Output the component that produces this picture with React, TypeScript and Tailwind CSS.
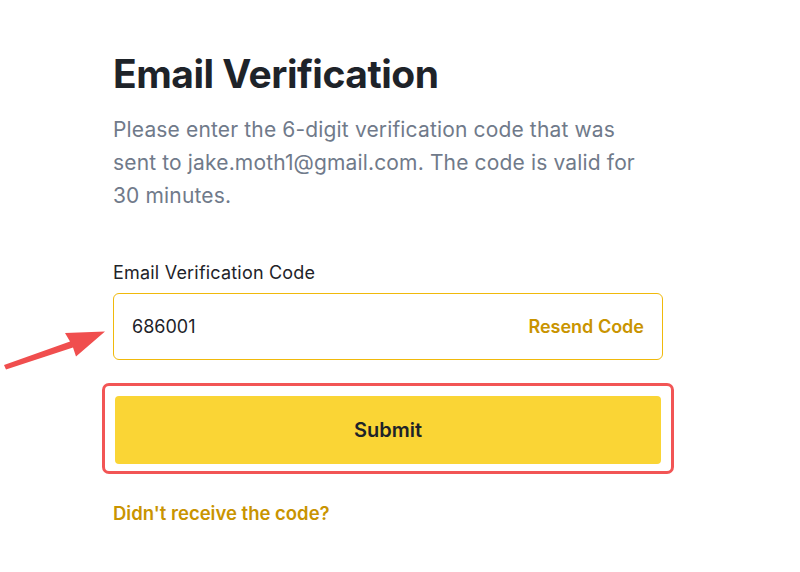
export default function App() {
  return (
    <div className="relative w-[800px] h-[572px] bg-white overflow-hidden font-['Inter',sans-serif]">
      <div className="pl-[113px] pt-[50px] w-[663px]">
        <h1 className="text-[39px] leading-[48px] font-bold text-[#1e2329] tracking-[-0.5px]">
          Email Verification
        </h1>
        <p className="mt-[15px] text-[21px] leading-[33px] text-[#707a8a] tracking-[0.15px]">
          Please enter the 6-digit verification code that was
          <br />
          sent to jake.moth1@gmail.com. The code is valid for
          <br />
          30 minutes.
        </p>

        <label className="block mt-[49px] text-[18px] leading-[24px] text-[#1e2329] tracking-[0.2px]">
          Email Verification Code
        </label>
        <div className="mt-[8px] h-[67px] flex items-center justify-between px-[18px] border-[1.5px] border-[#f0b90b] rounded-[6px]">
          <span className="text-[18px] text-[#1e2329]">686001</span>
          <span className="text-[18px] font-semibold text-[#c99400]">Resend Code</span>
        </div>

        <div className="mt-[23px] -ml-[11px] -mr-[11px] px-[10px] pt-[10px] pb-[7px] border-[3px] border-[#f25555] rounded-[7px]">
          <button className="w-full h-[68px] bg-[#fad535] rounded-[4px] text-[20px] font-semibold text-[#1e2329]">
            Submit
          </button>
        </div>

        <div className="mt-[26px] text-[18.5px] font-semibold text-[#c99400]">
          Didn't receive the code?
        </div>
      </div>

      <svg className="absolute left-0 top-[320px]" width="110" height="55" viewBox="0 320 110 55">
        <path
          d="M105 331.5 L65 333 L70 341.5 L4 365 L6 369.5 L73 347.5 L76 356.5 Z"
          fill="#f04e4e"
        />
      </svg>
    </div>
  );
}
